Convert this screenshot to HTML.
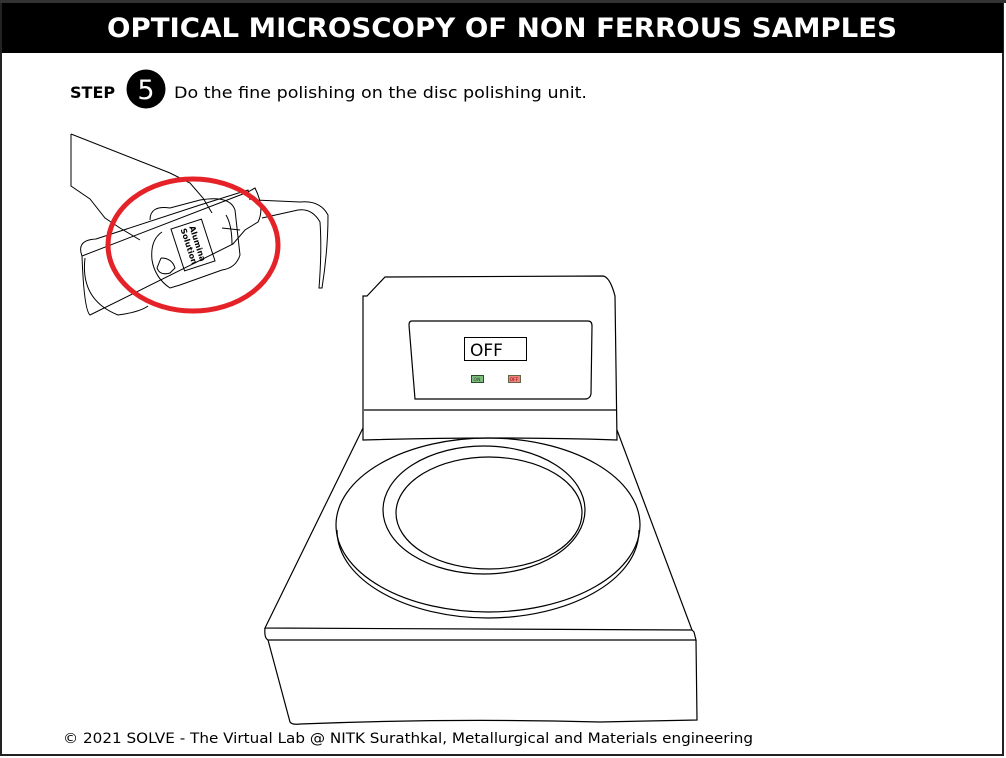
<!DOCTYPE html>
<html><head><meta charset="utf-8"><style>
html,body{margin:0;padding:0;background:#fff;width:1006px;height:758px;overflow:hidden}
svg{display:block}
</style></head><body>
<svg width="1006" height="758" viewBox="0 0 1006 758" xmlns="http://www.w3.org/2000/svg" font-family="DejaVu Sans, Liberation Sans, sans-serif">
<rect x="0" y="0" width="1006" height="758" fill="#fff"/>
<rect x="1" y="1" width="1002" height="754" fill="none" stroke="#222" stroke-width="2"/>
<rect x="0" y="0" width="1006" height="3" fill="#333"/>
<rect x="2" y="3" width="1001" height="50" fill="#000"/>
<text x="502" y="37" fill="#fff" font-weight="bold" font-size="27" text-anchor="middle" textLength="790" lengthAdjust="spacingAndGlyphs">OPTICAL MICROSCOPY OF NON FERROUS SAMPLES</text>
<text x="70" y="98" font-weight="bold" font-size="16" fill="#000">STEP</text>
<circle cx="146" cy="89" r="19.5" fill="#000"/>
<text x="146" y="99" font-size="27" fill="#fff" text-anchor="middle">5</text>
<text x="174" y="98" font-size="16" fill="#000" textLength="413" lengthAdjust="spacingAndGlyphs">Do the fine polishing on the disc polishing unit.</text>

<g fill="none" stroke="#000" stroke-width="1">
<path d="M71 134 L71 186 L90 199 L105 218 L120 228 L140 240"/>
<path d="M71 134 L170 173 L190 183 L203 198 L212 213"/>
<path d="M82 256 Q76 240 96 239 L200 205 L248 190 L250 200 M248 192 L255 188 Q265 208 258 222 L245 230 L233 244 L90 315 Q84 310 82 256 Z"/>
<path d="M85 258 Q80 300 118 315 Q140 312 148 306"/>
<path d="M255 200 L300 202 Q320 200 328 215 Q328 250 322 288 L319 288 Q322 250 320 222 Q312 208 298 210 L262 218"/>
<path d="M150 220 Q150 205 170 208 L200 200 Q230 195 235 210 L240 255 Q236 268 222 270 L180 285 L170 288 Q155 278 152 260 Q150 240 162 232"/>
<path d="M161 258 L157 268 Q160 276 170 273 L175 268 Q172 258 161 258"/>
<path d="M222 228 L240 230 M226 215 Q232 225 232 245"/>
<rect x="177" y="223" width="32" height="44" transform="rotate(-18 193 245)"/>
</g>
<text x="193" y="243" font-size="8" font-weight="bold" text-anchor="middle" transform="rotate(72 193 245)">Alumina</text>
<text x="193" y="252" font-size="8" font-weight="bold" text-anchor="middle" transform="rotate(72 193 245)">Solution</text>
<ellipse cx="193" cy="245" rx="85" ry="66" fill="none" stroke="#e42228" stroke-width="5"/>

<g fill="none" stroke="#000" stroke-width="1.2">
<path d="M363 428 L265 628 L692 630 L617 430"/>
<path d="M265 628 Q264 638 268 640 L696 640 L694 632 L692 630"/>
<path d="M268 640 L290 722 Q292 725 300 724 Q450 718 600 722 L697 720 L696 640"/>
<path d="M367 296 L385 277 L603 276 Q610 277 615 296 L617 440 Q500 436 363 440 L363 296 Z"/>
<path d="M364 410 L616 410"/>
<path d="M412 321 L588 321 Q592 321 592 326 L591 394 Q590 399 585 399 L415 399 L409 325 Q409 321 412 321 Z"/>
<ellipse cx="488" cy="525" rx="152" ry="87"/>
<path d="M337 530 C337 582 410 618 488 618 C566 618 639 582 639 530"/>
<ellipse cx="484" cy="510" rx="101" ry="64"/>
<ellipse cx="489" cy="513" rx="93" ry="56"/>
</g>
<rect x="464.5" y="337.5" width="62" height="23" fill="#fff" stroke="#000" stroke-width="1"/>
<text x="470" y="356" font-size="17" fill="#000">OFF</text>
<rect x="471.5" y="375.5" width="12" height="7" fill="#7cbf7c" stroke="#2a4a2a"/>
<rect x="508.5" y="375.5" width="12" height="7" fill="#f08080" stroke="#664"/>
<text x="477" y="381" font-size="4.5" text-anchor="middle" fill="#333">ON</text>
<text x="514" y="381" font-size="4.5" text-anchor="middle" fill="#800">OFF</text>

<text x="63" y="743" font-size="14" fill="#000" textLength="690" lengthAdjust="spacingAndGlyphs">© 2021 SOLVE - The Virtual Lab @ NITK Surathkal, Metallurgical and Materials engineering</text>
</svg>
</body></html>
